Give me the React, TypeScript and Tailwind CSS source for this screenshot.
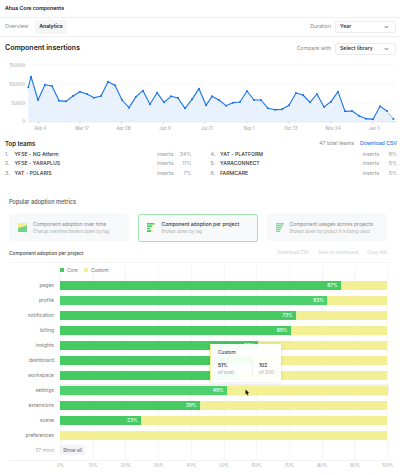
const font = "font-['Inter',sans-serif]";

const linePoints: [number, number][] = [
  [85, 262], [93, 230], [114, 300], [135, 254], [156, 258], [177, 302], [198, 304], [219, 288], [240, 275],
  [261, 282], [282, 293], [303, 288], [324, 245], [345, 256], [366, 300], [387, 323], [408, 290], [429, 272],
  [450, 313], [471, 278], [492, 307], [513, 289], [534, 294], [555, 325], [576, 298], [597, 266], [618, 316],
  [636, 289], [657, 300], [678, 317], [699, 308], [720, 306], [741, 273], [762, 300], [783, 300], [804, 325],
  [825, 329], [846, 328], [867, 316], [888, 279], [909, 285], [930, 307], [951, 282], [972, 321], [993, 305],
  [1014, 275], [1035, 334], [1056, 333], [1077, 347], [1098, 356], [1119, 358], [1140, 319], [1161, 333],
];
const lastPoint: [number, number] = [1180, 357];

// chart svg starts at y=60 in the page
const pts = linePoints.map(([x, y]) => [x / 3, y / 3 - 60] as [number, number]);
const lineD = pts.map(([x, y]) => `${x},${y}`).join(' ');
const areaD = `${pts[0][0]},61.7 ${lineD} ${lastPoint[0] / 3},${lastPoint[1] / 3 - 60} ${lastPoint[0] / 3},61.7`;

const yLabels = [
  { label: '150000', y: 5 },
  { label: '100000', y: 24 },
  { label: '50000', y: 43 },
  { label: '0', y: 61.7 },
];
const xLabels = [
  { label: 'Feb 4', x: 38.5 }, { label: 'Mar 17', x: 80 }, { label: 'Apr 28', x: 121.5 }, { label: 'Jun 9', x: 163 },
  { label: 'Jul 21', x: 205 }, { label: 'Sep 1', x: 247 }, { label: 'Oct 13', x: 289 }, { label: 'Nov 24', x: 331 },
  { label: 'Jan 5', x: 372.5 },
];

const teams = [
  [['1.', 'YFSE - NG Atfarm', '34%'], ['2.', 'YFSE - YARAPLUS', '11%'], ['3.', 'YAT - POLARIS', '7%']],
  [['4.', 'YAT - PLATFORM', '6%'], ['5.', 'YARACONNECT', '5%'], ['6.', 'FARMCARE', '5%']],
];

const bars = [
  { name: 'pages', pct: '87%', w: 'w-[86.2%]', tone: 'bg-[#45cb62]' },
  { name: 'profile', pct: '83%', w: 'w-[82%]', tone: 'bg-[#4fd06e]' },
  { name: 'notification', pct: '73%', w: 'w-[72.4%]', tone: 'bg-[#45cb62]' },
  { name: 'billing', pct: '69%', w: 'w-[70.8%]', tone: 'bg-[#45cb62]' },
  { name: 'insights', pct: '59%', w: 'w-[60.8%]', tone: 'bg-[#45cb62]' },
  { name: 'dashboard', pct: '', w: 'w-[59.4%]', tone: 'bg-[#45cb62]' },
  { name: 'workspace', pct: '', w: 'w-[55%]', tone: 'bg-[#45cb62]' },
  { name: 'settings', pct: '49%', w: 'w-[51.2%]', tone: 'bg-[#4fd06e]' },
  { name: 'extensions', pct: '39%', w: 'w-[43%]', tone: 'bg-[#45cb62]' },
  { name: 'scene', pct: '23%', w: 'w-[25%]', tone: 'bg-[#45cb62]' },
  { name: 'preferences', pct: '', w: 'w-0', tone: '' },
];

const ticks = ['0%', '10%', '20%', '30%', '40%', '50%', '60%', '70%', '80%', '90%', '100%'];

function Chevron() {
  return (
    <svg width="5" height="4" viewBox="0 0 6 4" fill="none" stroke="#333" strokeWidth="0.9">
      <path d="M1 1l2 2 2-2" />
    </svg>
  );
}

function SelectBox({ label }: { label: string }) {
  return (
    <div className="flex h-[12px] w-[61px] items-center justify-between rounded-[2px] border border-[#ececec] pl-1 pr-1.5 text-[5.2px] font-medium text-[#222]">
      {label}
      <Chevron />
    </div>
  );
}

function MetricCard({ title, sub, active, icon }: { title: string; sub: string; active?: boolean; icon: React.ReactNode }) {
  return (
    <div className={active
      ? 'flex h-[28px] w-[120.5px] items-center gap-[6px] rounded-[2px] border border-[#a5e6b5] bg-[#f8f9fa] pl-[8px]'
      : 'flex h-[27px] w-[120px] items-center gap-[6px] rounded-[2px] bg-[#f7f8fa] pl-[9px]'}>
      {icon}
      <div>
        <div className={active ? 'text-[5px] leading-[7px] font-medium text-[#333]' : 'text-[5px] leading-[7px] text-[#888]'}>{title}</div>
        <div className="mt-[1px] text-[4.3px] leading-[6px] text-[#aaa]">{sub}</div>
      </div>
    </div>
  );
}

export default function App() {
  return (
    <div className={`${font} h-[475px] w-[400px] overflow-hidden bg-white text-[#111]`}>
      <div className="flex h-[18px] items-center border-b border-[#eee] pl-[5px] text-[5.2px] font-semibold">Ahua Core components</div>

      <div className="flex h-[19px] items-center justify-between border-b border-[#eee] pl-[5px] pr-[4px] text-[5.2px]">
        <div className="flex items-center gap-[7px]">
          <span className="text-[#888]">Overview</span>
          <span className="rounded-[2px] bg-[#f6f6f6] px-1 py-[3px] font-semibold text-[#222]">Analytics</span>
        </div>
        <div className="flex items-center gap-1 text-[#888]">
          Duration
          <SelectBox label="Year" />
        </div>
      </div>

      <div className="flex h-[23px] items-center justify-between pl-[5px] pr-[4px]">
        <div className="text-[7px] font-semibold text-[#222]">Component insertions</div>
        <div className="flex items-center gap-1 text-[5.2px] text-[#888]">
          Compare with
          <SelectBox label="Select library" />
        </div>
      </div>

      <svg width="400" height="76" viewBox="0 0 400 76" className="block">
        {yLabels.map((t) => (
          <g key={t.label}>
            <line x1="28" x2="396" y1={t.y} y2={t.y} stroke={t.label === '0' ? '#c9c9c9' : '#f3f3f3'} strokeWidth="0.7" />
            <text x="25" y={t.y + 1.6} textAnchor="end" fontSize="4.4" fill="#999">{t.label}</text>
          </g>
        ))}
        <polygon points={areaD} fill="#e9f1fc" />
        <polyline points={lineD} fill="none" stroke="#1a73e8" strokeWidth="1.1" strokeLinejoin="round" />
        <line x1={pts[pts.length - 1][0]} y1={pts[pts.length - 1][1]} x2={lastPoint[0] / 3} y2={lastPoint[1] / 3 - 60} stroke="#1a73e8" strokeWidth="1" strokeDasharray="1.2 1.2" />
        {pts.map(([x, y]) => <circle key={x} cx={x} cy={y} r="1" fill="#1a73e8" />)}
        <circle cx={lastPoint[0] / 3} cy={lastPoint[1] / 3 - 60} r="1.1" fill="#1a73e8" />
        {xLabels.map((t) => (
          <g key={t.label}>
            <line x1={t.x} x2={t.x} y1="61.7" y2="64" stroke="#bbb" strokeWidth="0.5" />
            <text x={t.x + 2} y="70" textAnchor="middle" fontSize="4.4" fill="#999">{t.label}</text>
          </g>
        ))}
      </svg>

      <div className="mt-[3px] pl-[5px] pr-[3px]">
        <div className="flex items-center justify-between">
          <div className="text-[6px] font-semibold text-[#222]">Top teams</div>
          <div className="flex gap-[6px] text-[5.2px]">
            <span className="text-[#888]">47 total teams</span>
            <span className="font-medium text-[#1a73e8]">Download CSV</span>
          </div>
        </div>
        <div className="mt-[2px] flex gap-[19px]">
          {teams.map((col, i) => (
            <div key={i} className="flex-1">
              {col.map(([n, name, pct]) => (
                <div key={n} className="flex h-[9.5px] items-center text-[5.2px]">
                  <span className="w-[9.5px] text-[#888]">{n}</span>
                  <span className="flex-1 font-medium text-[#333]">{name}</span>
                  <span className="text-[#999]">inserts</span>
                  <span className="w-[18px] text-right text-[#999]">{pct}</span>
                </div>
              ))}
            </div>
          ))}
        </div>
      </div>

      <div className="mt-[19.5px] pl-[9px] text-[5.6px] font-medium text-[#555]">Popular adoption metrics</div>

      <div className="mt-[7.5px] flex items-center gap-[8.5px] pl-[9px]">
        <MetricCard
          title="Component adoption over time"
          sub="Change overtime broken down by tag"
          icon={
            <svg width="9" height="9" viewBox="0 0 9 9">
              <rect width="9" height="9" fill="#f5ef8f" />
              <path d="M0 9V5L9 2.5V9z" fill="#6fd58a" />
            </svg>
          }
        />
        <MetricCard
          active
          title="Component adoption per project"
          sub="Broken down by tag"
          icon={
            <svg width="9" height="9" viewBox="0 0 9 9">
              <rect y="0" width="7" height="1.6" fill="#45cb62" /><rect x="7" y="0" width="2" height="1.6" fill="#f5ef8f" />
              <rect y="2.4" width="5" height="1.6" fill="#45cb62" /><rect x="5" y="2.4" width="2" height="1.6" fill="#f5ef8f" />
              <rect y="4.8" width="3" height="1.6" fill="#45cb62" />
              <rect y="7.2" width="4" height="1.8" fill="#45cb62" /><rect x="4" y="7.2" width="2" height="1.8" fill="#f5ef8f" />
            </svg>
          }
        />
        <MetricCard
          title="Component usages across projects"
          sub="Broken down by project it is being used"
          icon={
            <svg width="8" height="9" viewBox="0 0 8 9" fill="#7ddc95">
              <rect width="8" height="1.4" /><rect y="1.9" width="7" height="1.4" /><rect y="3.8" width="6" height="1.4" /><rect y="5.7" width="5" height="1.4" /><rect y="7.6" width="4" height="1.4" />
            </svg>
          }
        />
      </div>

      <div className="mt-[7px] flex h-[9px] items-center justify-between pl-[9px] pr-[13px]">
        <span className="text-[4.8px] font-medium text-[#444]">Component adoption per project</span>
        <div className="flex gap-[9px] text-[4.5px] text-[#ccc]">
          <span>Download CSV</span>
          <span>Save to dashboard</span>
          <span>Copy link</span>
        </div>
      </div>

      <div className="mx-[9px] mt-[4.5px] h-px bg-[#f5f5f5]" />

      <div className="relative">
        {/* faint vertical gridlines behind the bars */}
        {ticks.map((t, i) => (
          <span key={t} className="absolute top-[2px] h-[195px] w-px bg-[#f6f6f6]" style={{ left: 60 + i * 32.7 }} />
        ))}

        <div className="relative flex h-[14px] items-center gap-[3px] pl-[60px] text-[4.8px] text-[#777]">
          <span className="h-[4px] w-[4px] bg-[#45cb62]" />
          <span className="mr-[3px]">Core</span>
          <span className="h-[4px] w-[4px] bg-[#f2f092]" />
          <span>Custom</span>
        </div>

        <div className="relative flex flex-col gap-[6px] pt-[3.5px]">
          {bars.map((b) => (
            <div key={b.name} className="flex h-[9px] items-center">
              <div className="w-[54px] text-right text-[5px] text-[#777]">{b.name}</div>
              <div className={b.name === 'settings'
                ? 'ml-[6px] flex h-[12px] w-[328.5px] items-center rounded-[1px] bg-[#f1f1f1] pr-[1px]'
                : 'ml-[6px] flex h-[9px] w-[327px] items-center'}>
                <div className="flex h-[9px] w-full bg-[#f2f092]">
                  {b.pct || b.tone ? (
                    <div className={`${b.w} ${b.tone} flex items-center justify-end border-r border-[#dff0a0] pr-[3px] text-[4.8px] font-medium text-white`}>{b.pct}</div>
                  ) : null}
                </div>
              </div>
            </div>
          ))}
        </div>

        <div className="relative mt-[6px] flex h-[9px] items-center">
          <div className="w-[54px] text-right text-[4.8px] text-[#aaa]">57 more</div>
          <div className="ml-[6px] rounded-[1px] bg-[#f2f4f7] px-[3px] py-[1.5px] text-[4.8px] text-[#666]">Show all</div>
        </div>

        <div className="mx-[9px] mt-[5px] h-px bg-[#f3f3f3]" />
        <div className="relative h-[10px]">
          {ticks.map((t, i) => (
            <span key={t} className="absolute top-[2px] -translate-x-1/2 text-[4.4px] text-[#aaa]" style={{ left: 60.5 + i * 32.7 }}>{t}</span>
          ))}
        </div>

        {/* hover tooltip over the bars */}
        <div className="absolute left-[210px] top-[81px] h-[38px] w-[71px] border-l border-[#f2f092] bg-white/95 pl-[7px] pt-[5px] shadow-[0_0_4px_rgba(0,0,0,0.12)]">
          <div className="text-[4.8px] font-medium text-[#444]">Custom</div>
          <div className="mt-[5px] flex">
            <div className="w-[35px] border-r border-[#f0f0f0]">
              <div className="text-[4.8px] font-semibold text-[#333]">51%</div>
              <div className="text-[4.8px] text-[#aaa]">of total</div>
            </div>
            <div className="pl-[6px]">
              <div className="text-[4.8px] font-semibold text-[#333]">102</div>
              <div className="text-[4.8px] text-[#aaa]">of 200</div>
            </div>
          </div>
        </div>

        {/* mouse cursor */}
        <svg className="absolute left-[245px] top-[126px]" width="5" height="7" viewBox="0 0 5 7">
          <path d="M0.5 0.5V5.5L1.7 4.4L2.6 6.5L3.5 6L2.6 4.1H4.2z" fill="#111" />
        </svg>
      </div>
    </div>
  );
}
